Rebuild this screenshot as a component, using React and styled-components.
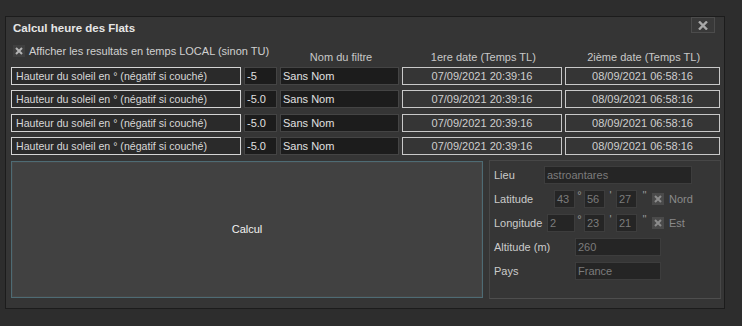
import React from 'react'
import styled, { createGlobalStyle } from 'styled-components'

const GlobalStyle = createGlobalStyle`
  body {
    margin: 0;
    background: #2d2d2d;
    font-family: "Liberation Sans", Arial, sans-serif;
  }
`

const rows = [
  { value: '-5', name: 'Sans Nom', d1: '07/09/2021 20:39:16', d2: '08/09/2021 06:58:16' },
  { value: '-5.0', name: 'Sans Nom', d1: '07/09/2021 20:39:16', d2: '08/09/2021 06:58:16' },
  { value: '-5.0', name: 'Sans Nom', d1: '07/09/2021 20:39:16', d2: '08/09/2021 06:58:16' },
  { value: '-5.0', name: 'Sans Nom', d1: '07/09/2021 20:39:16', d2: '08/09/2021 06:58:16' },
]

const CheckMark = ({ light }) => (
  <CheckBox $light={light}>
    <svg width="8" height="8" viewBox="0 0 8 8">
      <path d="M1 1 L7 7 M7 1 L1 7" stroke={light ? '#b4b4b4' : '#8c8c8c'} strokeWidth="2" />
    </svg>
  </CheckBox>
)

const App = () => {
  return (
    <>
      <GlobalStyle />
      <Page>
        <Window>
          <TitleBar>
            <Title>Calcul heure des Flats</Title>
            <CloseButton>
              <svg width="10" height="9" viewBox="0 0 10 9">
                <path d="M1 0.5 L9 8.5 M9 0.5 L1 8.5" stroke="#a8a8a8" strokeWidth="2.4" />
              </svg>
            </CloseButton>
          </TitleBar>
          <HeaderRow>
            <CheckCell>
              <CheckMark light />
              <span>Afficher les resultats en temps LOCAL (sinon TU)</span>
            </CheckCell>
            <HeaderCell $w={119}>Nom du filtre</HeaderCell>
            <HeaderCell $w={160}>1ere date (Temps TL)</HeaderCell>
            <HeaderCell $w={155}>2ième date (Temps TL)</HeaderCell>
          </HeaderRow>
          <Rows>
            {rows.map((r, i) => (
              <Row key={i}>
                <LabelBox>Hauteur du soleil en ° (négatif si couché)</LabelBox>
                <DarkField $w={33}>{r.value}</DarkField>
                <DarkField $w={119}>{r.name}</DarkField>
                <DateBox $w={160}>{r.d1}</DateBox>
                <DateBox $w={155}>{r.d2}</DateBox>
              </Row>
            ))}
          </Rows>
          <Bottom>
            <CalculButton>Calcul</CalculButton>
            <Panel>
              <PanelRow>
                <PanelLabel $w={50}>Lieu</PanelLabel>
                <PanelInput $w={148}>astroantares</PanelInput>
              </PanelRow>
              <PanelRow>
                <PanelLabel $w={60}>Latitude</PanelLabel>
                <PanelInput $w={21}>43</PanelInput>
                <Sep $w={9}>°</Sep>
                <PanelInput $w={21}>56</PanelInput>
                <Sep $w={11}>'</Sep>
                <PanelInput $w={21}>27</PanelInput>
                <Sep $w={15}>''</Sep>
                <CheckMark />
                <PanelText>Nord</PanelText>
              </PanelRow>
              <PanelRow>
                <PanelLabel $w={53}>Longitude</PanelLabel>
                <PanelInput $w={28}>2</PanelInput>
                <Sep $w={9}>°</Sep>
                <PanelInput $w={21}>23</PanelInput>
                <Sep $w={11}>'</Sep>
                <PanelInput $w={21}>21</PanelInput>
                <Sep $w={15}>''</Sep>
                <CheckMark />
                <PanelText>Est</PanelText>
              </PanelRow>
              <PanelRow>
                <PanelLabel $w={81}>Altitude (m)</PanelLabel>
                <PanelInput $w={86}>260</PanelInput>
              </PanelRow>
              <PanelRow>
                <PanelLabel $w={81}>Pays</PanelLabel>
                <PanelInput $w={86}>France</PanelInput>
              </PanelRow>
            </Panel>
          </Bottom>
        </Window>
      </Page>
    </>
  )
}

export default App

const Page = styled.div`
  padding: 16px 0 0 5px;
`
const Window = styled.div`
  box-sizing: border-box;
  width: 720px;
  height: 293px;
  background: #353535;
  border: 1px solid #1c1c1c;
  padding: 0 3px 0 5px;
  display: flex;
  flex-direction: column;
  color: #d6d6d6;
  font-size: 11px;
`
const TitleBar = styled.div`
  height: 22px;
  display: flex;
  align-items: flex-start;
  justify-content: space-between;
`
const Title = styled.div`
  font-weight: 700;
  font-size: 11.5px;
  color: #e6e6e6;
  margin: 5px 0 0 2px;
`
const CloseButton = styled.div`
  box-sizing: border-box;
  width: 24px;
  height: 16px;
  margin-right: 6px;
  background: #393939;
  border: 1px solid #4c4c4c;
  display: flex;
  align-items: center;
  justify-content: center;
`
const HeaderRow = styled.div`
  height: 28px;
  display: flex;
  gap: 3px;
`
const CheckCell = styled.div`
  width: 266px;
  display: flex;
  align-items: center;
  gap: 4px;
  padding-left: 2px;
  height: 14px;
  margin-top: 5px;
  color: #d0d0d0;
`
const CheckBox = styled.div`
  box-sizing: border-box;
  width: 12px;
  height: 12px;
  flex: none;
  background: ${p => (p.$light ? '#3f3f3f' : '#4a4a4a')};
  display: flex;
  align-items: center;
  justify-content: center;
`
const HeaderCell = styled.div`
  width: ${p => p.$w}px;
  align-self: flex-end;
  text-align: center;
  line-height: 14px;
  padding-bottom: 3px;
  color: #c8c8c8;
`
const Rows = styled.div`
  display: flex;
  flex-direction: column;
  gap: 5.3px;
`
const Row = styled.div`
  display: flex;
  gap: 3px;
  height: 18px;
`
const cell = `
  box-sizing: border-box;
  height: 18px;
  display: flex;
  align-items: center;
  white-space: nowrap;
  overflow: hidden;
`
const LabelBox = styled.div`
  ${cell}
  width: 230px;
  background: #2a2a2a;
  border: 1px solid #d4d4d4;
  padding-left: 4px;
  font-size: 10.6px;
  color: #d8d8d8;
`
const DarkField = styled.div`
  ${cell}
  width: ${p => p.$w}px;
  background: #1c1c1c;
  border: 1px solid #444;
  padding-left: 2px;
  color: #e0e0e0;
`
const DateBox = styled.div`
  ${cell}
  width: ${p => p.$w}px;
  justify-content: center;
  border: 1px solid #c8c8c8;
  color: #cfcfcf;
`
const Bottom = styled.div`
  margin-top: 5px;
  display: flex;
  align-items: center;
  gap: 6px;
`
const CalculButton = styled.div`
  box-sizing: border-box;
  width: 472px;
  height: 137px;
  background: #414141;
  border: 1px solid #4e6b74;
  box-shadow: inset 0 0 0 1px #464646;
  display: flex;
  align-items: center;
  justify-content: center;
  color: #f2f2f2;
  font-size: 11px;
`
const Panel = styled.div`
  box-sizing: border-box;
  width: 232px;
  height: 139px;
  background: #363636;
  border: 1px solid #474747;
  border-bottom-color: #4e4e4e;
  padding: 5px 0 0 4px;
  display: flex;
  flex-direction: column;
  gap: 6px;
`
const PanelRow = styled.div`
  display: flex;
  align-items: center;
  height: 18px;
`
const PanelLabel = styled.div`
  width: ${p => p.$w}px;
  flex: none;
  color: #cbcbcb;
`
const PanelInput = styled.div`
  box-sizing: border-box;
  width: ${p => p.$w}px;
  height: 18px;
  flex: none;
  background: #252525;
  border: 1px solid #3d3d3d;
  color: #7c7c7c;
  padding-left: 2px;
  display: flex;
  align-items: center;
`
const Sep = styled.div`
  width: ${p => p.$w}px;
  flex: none;
  align-self: flex-start;
  text-align: center;
  line-height: 10px;
  color: #9a9a9a;
`
const PanelText = styled.div`
  margin-left: 5px;
  color: #8a8a8a;
`
